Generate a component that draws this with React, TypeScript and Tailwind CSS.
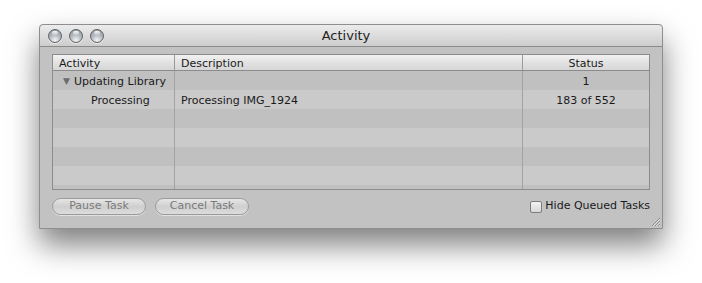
import React from "react";

const rows = [
  { activity: "Updating Library", description: "", status: "1", group: true },
  { activity: "Processing", description: "Processing IMG_1924", status: "183 of 552" },
  {}, {}, {}, {}, {},
] as { activity?: string; description?: string; status?: string; group?: boolean }[];

function TrafficLight() {
  return (
    <div className="w-[14px] h-[14px] rounded-full border border-[#5f6468] bg-[radial-gradient(circle_at_50%_85%,#f4f6f8_0%,#b7bcc2_45%,#8a9096_100%)] relative shadow-[0_1px_0_rgba(255,255,255,0.6)]">
      <div className="absolute left-[3px] top-[1px] w-[6px] h-[4px] rounded-full bg-gradient-to-b from-white/95 to-white/20" />
    </div>
  );
}

function Button({ label }: { label: string }) {
  return (
    <div className="h-[17px] w-[94px] rounded-full border border-[#9a9a9a] bg-gradient-to-b from-[#e6e6e6] via-[#cfcfcf] to-[#dcdcdc] flex items-center justify-center text-[11px] text-[#7a7a7a] shadow-[0_1px_0_rgba(255,255,255,0.5)]">
      {label}
    </div>
  );
}

export default function App() {
  return (
    <div className="w-[702px] h-[283px] bg-white pt-[24px] pl-[39px] font-['DejaVu_Sans',sans-serif] text-[#1a1a1a]">
      <div className="w-[624px] h-[205px] flex flex-col bg-[#c2c2c2] border border-[#8e8e8e] rounded-t-[4px] shadow-[0_16px_30px_rgba(0,0,0,0.5)] relative">
        {/* title bar */}
        <div className="h-[22px] flex items-center px-[8px] bg-gradient-to-b from-[#ececec] to-[#cdcdcd] border-b border-[#8a8a8a] rounded-t-[4px] relative">
          <div className="flex gap-[7px]">
            <TrafficLight />
            <TrafficLight />
            <TrafficLight />
          </div>
          <div className="absolute inset-0 flex items-center justify-center text-[13px] text-[#222] pr-[10px]">
            Activity
          </div>
        </div>

        <div className="flex flex-col px-[12px] pt-[7px]">
          {/* table */}
          <div className="h-[136px] border border-[#8c8c8c] flex flex-col overflow-hidden bg-[#c0c0c0]">
            <div className="h-[16px] flex shrink-0 text-[11px] bg-gradient-to-b from-[#f2f2f2] via-[#e2e2e2] to-[#d6d6d6] border-b border-[#8c8c8c]">
              <div className="w-[122px] border-r border-[#9a9a9a] pl-[6px] leading-[17px]">Activity</div>
              <div className="w-[348px] border-r border-[#9a9a9a] pl-[6px] leading-[17px]">Description</div>
              <div className="flex-1 text-center leading-[17px]">Status</div>
            </div>
            {rows.map((r, i) => (
              <div
                key={i}
                className={`h-[19px] flex shrink-0 text-[11px] leading-[21px] ${i % 2 === 0 ? "bg-[#c0c0c0]" : "bg-[#cacaca]"}`}
              >
                <div className="w-[122px] border-r border-[#a2a2a2]">
                  {r.group ? (
                    <span className="pl-[10px] flex items-center h-[21px]">
                      <span className="text-[9px] text-[#6c6c6c] mr-[4px]">▼</span>
                      {r.activity}
                    </span>
                  ) : (
                    <span className="pl-[38px]">{r.activity}</span>
                  )}
                </div>
                <div className="w-[348px] border-r border-[#a2a2a2] pl-[6px]">{r.description}</div>
                <div className="flex-1 text-center">{r.status}</div>
              </div>
            ))}
          </div>

          {/* bottom bar */}
          <div className="mt-[8px] flex items-center">
            <div className="flex gap-[9px]">
              <Button label="Pause Task" />
              <Button label="Cancel Task" />
            </div>
            <div className="ml-auto flex items-center text-[11px] text-[#1a1a1a]">
              <div className="w-[12px] h-[12px] border border-[#7c7c7c] rounded-[2px] bg-gradient-to-b from-[#f4f4f4] to-[#d8d8d8] mr-[3px]" />
              Hide Queued Tasks
            </div>
          </div>
        </div>

        {/* resize grip */}
        <svg className="absolute right-[1px] bottom-[1px]" width="11" height="11" viewBox="0 0 11 11">
          <path d="M10 2 L2 10 M10 5 L5 10 M10 8 L8 10" stroke="#8a8a8a" strokeWidth="1" />
          <path d="M10 3 L3 10 M10 6 L6 10 M10 9 L9 10" stroke="#e0e0e0" strokeWidth="1" />
        </svg>
      </div>
    </div>
  );
}
